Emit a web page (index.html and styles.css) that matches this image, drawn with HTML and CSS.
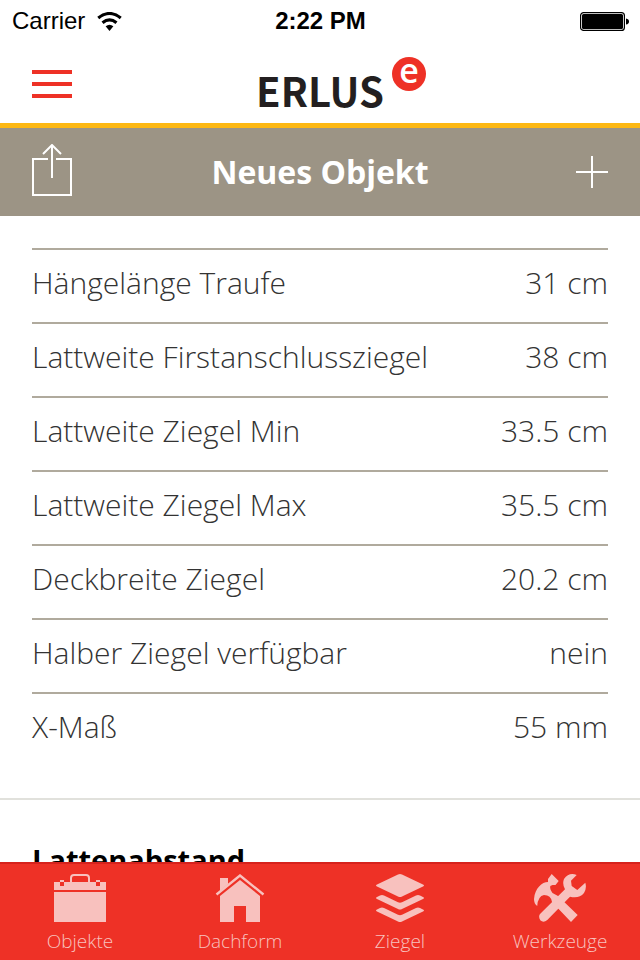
FILE: index.html
```
<!DOCTYPE html>
<html lang="de">
<head>
  <meta charset="UTF-8" />
  <meta name="viewport" content="width=device-width, initial-scale=1.0"/>
  <title>ERLUS - Neues Objekt</title>
  <link rel="stylesheet" href="styles.css">
</head>
<body>
  <div class="status-bar">
    <div class="carrier">
      <span>Carrier</span>
      <svg class="wifi" viewBox="0 0 24 18" aria-hidden="true">
        <path d="M1.2 5.6Q12 -3 22.8 5.6" fill="none" stroke="#000" stroke-width="3"/>
        <path d="M5.3 10.2Q12 4.6 18.7 10.2" fill="none" stroke="#000" stroke-width="3"/>
        <path d="M8.3 13.6Q12 10.4 15.7 13.6L12 18Z"/>
      </svg>
    </div>
    <strong class="clock">2:22 PM</strong>
    <svg class="battery" viewBox="0 0 49 19" aria-label="Akku">
      <rect x="0.6" y="0.6" width="43.8" height="17.8" rx="3" fill="none" stroke="#000" stroke-width="1.2"/>
      <rect x="2" y="2" width="41" height="15" rx="1.5"/>
      <path d="M46 6.5Q49 7 49 9.5T46 12.5Z"/>
    </svg>
  </div>

  <header class="brand-bar">
    <button class="icon-btn" type="button" aria-label="Menü">
      <svg class="menu-icon" viewBox="0 0 40 28">
        <path d="M0 2H40M0 14H40M0 26H40" stroke="#ee3126" stroke-width="4"/>
      </svg>
    </button>
    <a class="logo" href="#">
      ERLUS
      <svg class="logo-badge" viewBox="0 0 34 34">
        <circle cx="17" cy="17" r="17" fill="#ee3126"/>
        <text x="17" y="26">e</text>
      </svg>
    </a>
  </header>

  <div class="title-bar">
    <button class="icon-btn" type="button" aria-label="Teilen">
      <svg class="share-icon" viewBox="0 0 40 56">
        <path d="M16 15H1V51H39V15H24M20 34V1M11 10L20 1L29 10" fill="none" stroke="#fff" stroke-width="2"/>
      </svg>
    </button>
    <h1>Neues Objekt</h1>
    <button class="icon-btn" type="button" aria-label="Hinzufügen">
      <svg class="plus-icon" viewBox="0 0 32 32">
        <path d="M0 16H32M16 0V32" stroke="#fff" stroke-width="2"/>
      </svg>
    </button>
  </div>

  <main>
    <section class="group">
      <table>
        <tbody>
          <tr><th scope="row">Hängelänge Traufe</th><td>31 cm</td></tr>
          <tr><th scope="row">Lattweite Firstanschlussziegel</th><td>38 cm</td></tr>
          <tr><th scope="row">Lattweite Ziegel Min</th><td>33.5 cm</td></tr>
          <tr><th scope="row">Lattweite Ziegel Max</th><td>35.5 cm</td></tr>
          <tr><th scope="row">Deckbreite Ziegel</th><td>20.2 cm</td></tr>
          <tr><th scope="row">Halber Ziegel verfügbar</th><td>nein</td></tr>
          <tr><th scope="row">X-Maß</th><td>55 mm</td></tr>
        </tbody>
      </table>
    </section>
    <section class="group">
      <h2>Lattenabstand</h2>
    </section>
  </main>

  <nav class="tab-bar">
    <a href="#">
      <svg viewBox="0 0 52 48">
        <path d="M17 9V4Q17 1 20 1H32Q35 1 35 4V9" fill="none" stroke="#f8c1be" stroke-width="2"/>
        <path d="M0 8H6V12H10V8H42V12H46V8H52V16H0ZM0 18H52V48H0ZM6 6H10V8H6ZM42 6H46V8H42Z"/>
      </svg>
      <span>Objekte</span>
    </a>
    <a href="#">
      <svg viewBox="0 0 52 48">
        <path d="M6 4H14V10L6 17Z"/>
        <path d="M2.5 20.5L26 1.5L49.5 20.5" fill="none" stroke="#f8c1be" stroke-width="2.4"/>
        <path d="M6 22L26 6L46 22V48H32V32H20V48H6Z"/>
      </svg>
      <span>Dachform</span>
    </a>
    <a href="#">
      <svg viewBox="0 0 52 48">
        <path d="M24 .5Q26 -.5 28 .5L49 10.5Q51 11.5 49 12.5L28 22.5Q26 23.5 24 22.5L3 12.5Q1 11.5 3 10.5Z"/>
        <path d="M3 23L6 21.5Q8 20.7 10 21.5L24 28.3Q26 29.2 28 28.3L42 21.5Q44 20.7 46 21.5L49 23Q51 24 49 25L28 35Q26 36 24 35L3 25Q1 24 3 23Z"/>
        <path d="M3 35.5L6 34Q8 33.2 10 34L24 40.8Q26 41.7 28 40.8L42 34Q44 33.2 46 34L49 35.5Q51 36.5 49 37.5L28 47.5Q26 48.5 24 47.5L3 37.5Q1 36.5 3 35.5Z"/>
      </svg>
      <span>Ziegel</span>
    </a>
    <a href="#">
      <svg viewBox="0 0 52 48">
        <path d="M17.7 0L24.7 7L21.5 11L18.5 11L16.3 12Q15.5 15 18.5 19L24 22L43.7 41L37 48L18 28Q17 21 10 21Q4 22 3.2 32Q0 30 0 25C1 14 8 8 14 8V5Z"/>
        <path d="M42.7 1L37 6.7L37.7 12L43.3 16L51.3 8.7Q53 14 50 19Q45 25 36 22.7L13.3 46Q9.5 49 6.5 46.5Q4 43 6 40L31 15.3Q28 10 30 5Q35 -2 42.7 1Z"/>
      </svg>
      <span>Werkzeuge</span>
    </a>
  </nav>
</body>
</html>
```
FILE: styles.css
```
* {
  box-sizing: border-box;
}
body {
  display: flex;
  flex-direction: column;
  height: 100vh;
  margin: 0;
  background: #fff;
  color: #333;
  font-family: "Open Sans", "Noto Sans", sans-serif;
}
.status-bar {
  display: grid;
  grid-template-columns: 1fr auto 1fr;
  align-items: center;
  height: 40px;
  padding: 2px 11px 0 12px;
  color: #000;
  font-family: "Liberation Sans", Arial, sans-serif;
  font-size: 24px;
}
.carrier {
  display: flex;
  align-items: center;
  gap: 12px;
}
.wifi {
  width: 25px;
  height: 19px;
}
.battery {
  width: 49px;
  height: 19px;
  justify-self: end;
}
.brand-bar,
.title-bar {
  display: grid;
  grid-template-columns: 40px 1fr 40px;
  align-items: center;
  padding: 0 32px;
}
.brand-bar {
  height: 88px;
  padding-top: 5px;
  border-bottom: 5px solid #fdb813;
}
.icon-btn {
  display: flex;
  padding: 0;
  border: none;
  background: none;
  cursor: pointer;
}
.menu-icon {
  width: 40px;
  height: 28px;
}
.logo {
  position: relative;
  justify-self: center;
  padding-top: 12px;
  color: #231f20;
  font-family: "Noto Sans CJK SC", sans-serif;
  font-size: 40px;
  font-weight: 700;
  line-height: 48px;
  text-decoration: none;
}
.logo-badge {
  position: absolute;
  top: 3px;
  left: 100%;
  width: 34px;
  height: 34px;
  margin-left: 8px;
}
.logo-badge text {
  fill: #fff;
  font-family: "Open Sans", sans-serif;
  font-size: 34px;
  font-weight: 600;
  text-anchor: middle;
}
.title-bar {
  height: 88px;
  background: #9c9485;
  color: #fff;
}
.title-bar h1 {
  margin: 0;
  padding-bottom: 2px;
  font-size: 32px;
  font-weight: 700;
  text-align: center;
}
.title-bar .icon-btn:last-child {
  justify-content: flex-end;
}
.share-icon {
  width: 40px;
  height: 56px;
}
.plus-icon {
  width: 32px;
  height: 32px;
}
main {
  flex: 1;
  min-height: 0;
  overflow-y: auto;
  scrollbar-width: none;
}
.group {
  padding: 32px;
}
.group + .group {
  border-top: 2px solid #e1e1dc;
}
table {
  width: 100%;
  border-spacing: 0;
}
th, td {
  height: 74px;
  padding: 0 0 8px;
  border-top: 2px solid #b0aa9d;
  font-size: 30px;
  font-weight: 300;
  text-align: left;
}
td {
  text-align: right;
}
h2 {
  margin: 0;
  padding-top: 8px;
  color: #000;
  font-size: 29px;
  font-weight: 700;
}
.tab-bar {
  display: flex;
  height: 98px;
  border-top: 2px solid #d6221c;
  background: #ee3126;
}
.tab-bar a {
  display: flex;
  flex: 1;
  flex-direction: column;
  align-items: center;
  padding-top: 10px;
  color: #f8c1be;
  font-size: 19px;
  font-weight: 300;
  text-decoration: none;
}
.tab-bar svg {
  width: 52px;
  height: 48px;
  fill: #f8c1be;
}
.tab-bar span {
  margin-top: 6px;
}
```
